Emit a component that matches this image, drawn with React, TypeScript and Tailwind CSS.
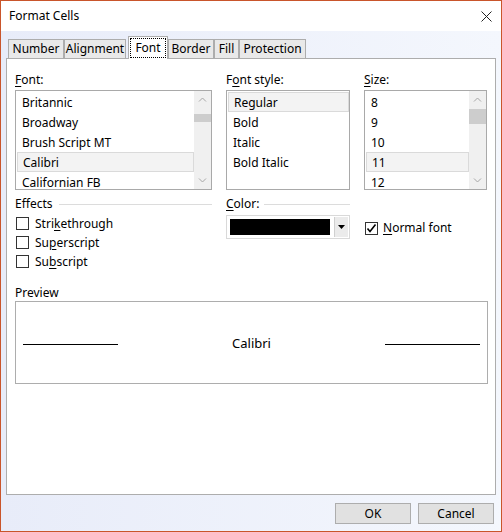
import React from 'react'

const tabs = [
  { label: 'Number', w: 'w-[56px]' },
  { label: 'Alignment', w: 'w-[62px]' },
  { label: 'Font', w: 'w-[40px]', active: true },
  { label: 'Border', w: 'w-[46px]' },
  { label: 'Fill', w: 'w-[25px]' },
  { label: 'Protection', w: 'w-[67px]' },
]

function Chevron({ up }: { up?: boolean }) {
  return (
    <svg width="9" height="5" viewBox="0 0 9 5">
      <polyline
        points={up ? '1,4.5 4.5,1 8,4.5' : '1,0.5 4.5,4 8,0.5'}
        fill="none"
        stroke="#a6a6a6"
        strokeWidth="1"
      />
    </svg>
  )
}

function ScrollBar({ thumbTop, thumbH }: { thumbTop: string; thumbH: string }) {
  return (
    <div className="w-[17px] h-full bg-[#f0f0f0] flex flex-col">
      <div className="h-[17px] flex items-center justify-center">
        <Chevron up />
      </div>
      <div className="flex-1">
        <div className={`${thumbTop} ${thumbH} bg-[#cdcdcd]`} />
      </div>
      <div className="h-[17px] flex items-center justify-center">
        <Chevron />
      </div>
    </div>
  )
}

function ListBox({
  items,
  selected,
  scroll,
}: {
  items: string[]
  selected: number
  scroll?: { top: string; h: string }
}) {
  return (
    <div className="mt-[2px] h-[100px] border border-[#a9a9a9] bg-white flex overflow-hidden">
      <div className="flex-1 pt-[1px] pl-[1px]">
        {items.map((it, i) => (
          <div
            key={it}
            className={`h-[20px] flex items-center pt-[2px] pl-[5px] ${
              i === selected ? 'bg-[#f3f3f3] border border-[#dadada] pl-[4px]' : ''
            }`}
          >
            {it}
          </div>
        ))}
      </div>
      {scroll && <ScrollBar thumbTop={scroll.top} thumbH={scroll.h} />}
    </div>
  )
}

function CheckBox({ checked }: { checked?: boolean }) {
  return (
    <div className="w-[13px] h-[13px] border border-[#333333] bg-white flex items-center justify-center">
      {checked && (
        <svg width="11" height="11" viewBox="0 0 11 11">
          <polyline points="1.5,5.5 4,8.5 9.5,1.5" fill="none" stroke="#000" strokeWidth="1.6" />
        </svg>
      )}
    </div>
  )
}

function Label({ pre, u, post }: { pre?: string; u: string; post?: string }) {
  return (
    <span>
      {pre}
      <u className="underline-offset-2">{u}</u>
      {post}
    </span>
  )
}

export default function App() {
  return (
    <div className="w-[502px] h-[532px] border border-[#c9552b] flex flex-col font-['Noto_Sans',sans-serif] text-[12px] leading-[16px] text-black">
      {/* title bar */}
      <div className="h-[30px] bg-white flex items-center justify-between pl-[8px] pr-[9px]">
        <span>Format Cells</span>
        <svg width="11" height="11" viewBox="0 0 11 11">
          <path d="M0.5 0.5 L10.5 10.5 M10.5 0.5 L0.5 10.5" stroke="#222" strokeWidth="1" />
        </svg>
      </div>

      {/* body */}
      <div className="flex-1 bg-gradient-to-r from-[#e8ecf9] to-[#f4f7fd] px-[5px] flex flex-col">
        {/* tabs */}
        <div className="h-[27px] flex items-end pl-[2px]">
          {tabs.map((t) =>
            t.active ? (
              <div
                key={t.label}
                className={`${t.w} h-[23px] -mb-[1px] ml-[2px] relative z-10 bg-white border-l border-t border-r border-[#adadad] p-[1px]`}
              >
                <div className="h-full border border-dotted border-black flex items-center justify-center pb-[1px]">
                  {t.label}
                </div>
              </div>
            ) : (
              <div
                key={t.label}
                className={`${t.w} h-[19px] bg-[#e9e9e9] border-l border-t border-r border-[#adadad] flex items-center justify-center`}
              >
                {t.label}
              </div>
            )
          )}
        </div>

        {/* panel */}
        <div className="h-[437px] bg-white border border-[#adadad] pl-[8px] pt-[13px]">
          <div className="flex gap-[14px]">
            <div className="w-[197px]">
              <div className="h-[16px]">
                <Label u="F" post="ont:" />
              </div>
              <ListBox
                items={['Britannic', 'Broadway', 'Brush Script MT', 'Calibri', 'Californian FB']}
                selected={3}
                scroll={{ top: 'mt-[6px]', h: 'h-[8px]' }}
              />
            </div>
            <div className="w-[124px]">
              <div className="h-[16px]">
                <Label pre="F" u="o" post="nt style:" />
              </div>
              <ListBox items={['Regular', 'Bold', 'Italic', 'Bold Italic']} selected={0} />
            </div>
            <div className="w-[123px]">
              <div className="h-[16px]">
                <Label u="S" post="ize:" />
              </div>
              <ListBox
                items={['8', '9', '10', '11', '12']}
                selected={3}
                scroll={{ top: 'mt-[1px]', h: 'h-[15px]' }}
              />
            </div>
          </div>

          <div className="flex gap-[14px] mt-[6px]">
            <div className="w-[197px]">
              <div className="h-[16px] flex items-center">
                <span>Effects</span>
                <div className="flex-1 h-px bg-[#dcdcdc] ml-[6px]" />
              </div>
              <div className="mt-[2px]">
                {[
                  { pre: 'Stri', u: 'k', post: 'ethrough' },
                  { pre: 'Su', u: 'p', post: 'erscript' },
                  { pre: 'Su', u: 'b', post: 'script' },
                ].map((c) => (
                  <div key={c.post} className="h-[19px] flex items-center pl-[1px]">
                    <CheckBox />
                    <span className="ml-[6px]">
                      <Label pre={c.pre} u={c.u} post={c.post} />
                    </span>
                  </div>
                ))}
              </div>
            </div>
            <div className="w-[124px]">
              <div className="h-[16px] flex items-center">
                <Label u="C" post="olor:" />
                <div className="flex-1 h-px bg-[#dcdcdc] ml-[5px]" />
              </div>
              <div className="mt-[3px] h-[24px] border border-[#d9d9d9] bg-white flex items-center pl-[3px] pr-[1px]">
                <div className="w-[100px] h-[16px] bg-black" />
                <div className="ml-auto w-[14px] h-[20px] bg-[#ebebeb] border-l border-[#d0d0d0] flex items-center justify-center">
                  <svg width="7" height="4" viewBox="0 0 7 4">
                    <polygon points="0,0 7,0 3.5,4" fill="#000" />
                  </svg>
                </div>
              </div>
            </div>
            <div className="w-[123px]">
              <div className="mt-[24px] h-[16px] flex items-center pl-[1px]">
                <CheckBox checked />
                <span className="ml-[5px]">
                  <Label u="N" post="ormal font" />
                </span>
              </div>
            </div>
          </div>

          <div className="mt-[14px] h-[16px]">Preview</div>
          <div className="w-[473px] h-[83px] border border-[#adadad] flex items-center justify-between px-[7px]">
            <div className="w-[95px] h-px bg-black mt-[4px]" />
            <span className="text-[13px]">Calibri</span>
            <div className="w-[95px] h-px bg-black mt-[4px]" />
          </div>
        </div>

        {/* buttons */}
        <div className="mt-[8px] flex justify-end gap-[7px] pr-[2px]">
          <button className="w-[76px] h-[21px] bg-[#e1e1e1] border border-[#adadad] leading-[16px]">OK</button>
          <button className="w-[76px] h-[21px] bg-[#e1e1e1] border border-[#adadad] leading-[16px]">Cancel</button>
        </div>
      </div>
    </div>
  )
}
